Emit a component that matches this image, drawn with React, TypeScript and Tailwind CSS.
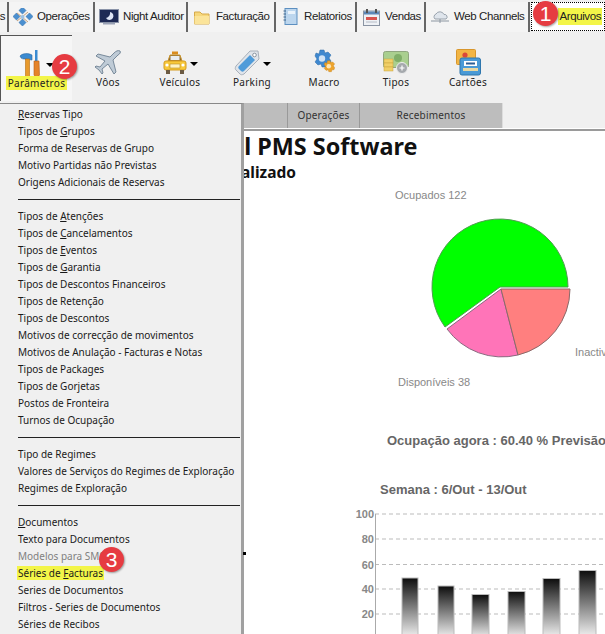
import React from "react";

const Dot = ({ x, y }: { x: number; y: number }) => <rect x={x} y={y} width="5" height="5" transform={`rotate(45 ${x + 2.5} ${y + 2.5})`} fill="#4a8fd0" stroke="#2c6aa8" strokeWidth="0.5" />;

const TabIcons: Record<string, React.ReactNode> = {
  ops: (
    <svg width="20" height="18" viewBox="0 0 20 18">
      <Dot x={7} y={0} /><Dot x={1} y={6} /><Dot x={14} y={6} /><Dot x={7} y={12} />
      <path d="M4 5 L9 9 L15 4 M4 13 L9 9 L15 14" stroke="#c9a27a" strokeWidth="1" fill="none" />
      <circle cx="9.5" cy="9" r="2" fill="#9cc3e6" />
    </svg>
  ),
  night: (
    <svg width="20" height="16" viewBox="0 0 20 16">
      <rect x="0.5" y="0.5" width="19" height="13" fill="#1e2a55" stroke="#8a93a8" />
      <path d="M11 3 A4 4 0 1 1 7 9 A5 5 0 0 0 11 3 Z" fill="#dfe5f5" />
      <rect x="4" y="14" width="12" height="1.5" fill="#9aa2b5" />
    </svg>
  ),
  folder: (
    <svg width="16" height="15" viewBox="0 0 16 15">
      <path d="M0.5 2 H6 L8 4 H15 V14 H0.5 Z" fill="#f6d77c" stroke="#d6aa4a" />
      <path d="M0.5 6 H15 V14 H0.5 Z" fill="#fbe49a" />
    </svg>
  ),
  book: (
    <svg width="15" height="18" viewBox="0 0 15 18">
      <rect x="2" y="0.5" width="12" height="16" fill="#bcd6ee" stroke="#5c8fc0" />
      <path d="M0.5 3 H3 M0.5 6 H3 M0.5 9 H3 M0.5 12 H3" stroke="#44688c" />
      <rect x="5" y="3" width="7" height="3" fill="#eaf3fb" />
    </svg>
  ),
  cal: (
    <svg width="17" height="17" viewBox="0 0 17 17">
      <rect x="0.5" y="2" width="16" height="14.5" fill="#eef1f5" stroke="#8a94a3" />
      <rect x="1" y="2.5" width="15" height="3" fill="#5d88b8" />
      <rect x="3" y="0" width="2" height="4" fill="#555" />
      <rect x="12" y="0" width="2" height="4" fill="#555" />
      <rect x="3" y="8" width="11" height="3" fill="#d9534f" />
      <path d="M3 13 H14" stroke="#b6bcc6" />
    </svg>
  ),
  cloud: (
    <svg width="18" height="13" viewBox="0 0 18 13">
      <path d="M4 8 A3 3 0 0 1 5 3 A4.5 4.5 0 0 1 13 3.5 A2.5 2.5 0 0 1 15 8 Z" fill="#dfe5ec" stroke="#9aa3ad" />
      <path d="M0 10 H18 M9 8 V12" stroke="#8c96a1" />
    </svg>
  ),
};

const tabs = [
  { label: "Operações", icon: "ops", w: "w-[86px]" },
  { label: "Night Auditor", icon: "night", w: "w-[93px]" },
  { label: "Facturação", icon: "folder", w: "w-[88px]" },
  { label: "Relatorios", icon: "book", w: "w-[81px]" },
  { label: "Vendas", icon: "cal", w: "w-[69px]" },
  { label: "Web Channels", icon: "cloud", w: "w-[104px]" },
];

const Plane = () => (
  <svg width="28" height="26" viewBox="0 0 28 26">
    <path d="M26 1 C24 0 22 1 20 3 L16 7 L4 4 L2 6 L11 11 L6 17 L2 16 L1 17 L5 20 L8 24 L9 23 L8 19 L14 14 L20 24 L22 22 L19 10 L24 5 C26 4 27 2 26 1 Z" fill="#bfcbd6" stroke="#6d8092" strokeWidth="0.9" />
  </svg>
);
const Taxi = () => (
  <svg width="24" height="24" viewBox="0 0 24 24">
    <rect x="9" y="0.5" width="6" height="3" fill="#d98c1f" />
    <path d="M5 10 L7 4 H17 L19 10 Z" fill="#8a6a3a" stroke="#c9952c" />
    <rect x="7.5" y="5" width="9" height="4" fill="#e8edf2" />
    <rect x="1" y="10" width="22" height="9" rx="2" fill="#f8c93a" stroke="#d59b20" />
    <rect x="7" y="13" width="10" height="4" fill="#fff3c2" stroke="#b58a25" strokeWidth="0.6" />
    <circle cx="4" cy="14" r="1.6" fill="#fff" /><circle cx="20" cy="14" r="1.6" fill="#fff" />
    <rect x="3" y="19" width="4" height="4" fill="#6b5a44" /><rect x="17" y="19" width="4" height="4" fill="#6b5a44" />
  </svg>
);
const Tag = () => (
  <svg width="26" height="26" viewBox="0 0 26 26">
    <path d="M16 1 L24 1 L25 9 L10 24 C8 25 7 25 6 24 L2 20 C1 19 1 18 2 16 Z" fill="#dfe4ea" stroke="#a8b0ba" />
    <path d="M16 5 L21 10 L10 21 C9 22 8 22 7 21 L5 19 C4 18 4 17 5 16 Z" fill="#4f9bd9" />
    <circle cx="20.5" cy="5" r="1.8" fill="#fff" stroke="#8a94a0" />
  </svg>
);
const gear = "M10 1 h4 l1 3 3 -1 3 3 -2 3 2 3 -1 3 -3 0 -1 3 h-4 l-1 -3 -3 1 -3 -3 2 -3 -2 -3 1 -3 3 1 z";
const Gears = () => (
  <svg width="26" height="27" viewBox="0 0 26 27">
    <path d={gear} fill="#3f88cf" stroke="#2d6aa6" strokeWidth="0.5" transform="translate(-1 0)" />
    <circle cx="11" cy="9.5" r="3.2" fill="#cfe2f5" />
    <g transform="translate(10 11) scale(0.65)"><path d={gear} fill="#eda32c" stroke="#c27f16" strokeWidth="0.6" /><circle cx="12" cy="9.5" r="3.5" fill="#fde6b5" /></g>
  </svg>
);
const Money = () => (
  <svg width="26" height="24" viewBox="0 0 26 24">
    <rect x="0.5" y="0.5" width="25" height="16" rx="2" fill="#a9cf8f" stroke="#8fa67f" />
    <circle cx="15" cy="7" r="4" fill="#7fae68" />
    <rect x="1" y="8" width="9" height="4" fill="#f0d068" stroke="#c9a33c" strokeWidth="0.5" />
    <rect x="1" y="12" width="9" height="4" fill="#f0d068" stroke="#c9a33c" strokeWidth="0.5" />
    <rect x="1" y="16" width="9" height="4" fill="#f0d068" stroke="#c9a33c" strokeWidth="0.5" />
    <circle cx="19" cy="17" r="5.5" fill="#a5a9ad" stroke="#eee" />
    <path d="M19 14.5 V19.5 M16.5 17 H21.5" stroke="#fff" strokeWidth="1.2" />
  </svg>
);
const Cards = () => (
  <svg width="25" height="27" viewBox="0 0 25 27">
    <rect x="0.5" y="0.5" width="19" height="15" rx="1" fill="#f2b544" stroke="#d8962c" />
    <circle cx="9" cy="6" r="2.6" fill="#d9483a" />
    <rect x="5" y="9" width="10" height="1.5" fill="#d9483a" />
    <rect x="4" y="9" width="20.5" height="17" rx="2" fill="#4a9ad6" stroke="#2e76ad" />
    <rect x="8" y="12" width="13" height="5" fill="#fff" />
    <rect x="10" y="13.5" width="9" height="2" fill="#2e5f95" />
    <rect x="7" y="19" width="15" height="3" fill="#e9d9a3" />
  </svg>
);
const Tools = () => (
  <svg width="24" height="28" viewBox="0 0 24 28">
    <path d="M1 6 C4 3 9 3 13 5 L13 10 L6 9 C4 9 2 9 1 6 Z" fill="#3b8bd1" stroke="#2a68a3" strokeWidth="0.6" />
    <rect x="6.5" y="9" width="4" height="18" fill="#e89a2c" stroke="#b86f12" strokeWidth="0.6" />
    <rect x="16" y="0" width="2.5" height="11" fill="#3b8bd1" />
    <path d="M15 11 H20 L20.5 25 C20 27 15.5 27 15 25 Z" fill="#e5842a" stroke="#b5601a" strokeWidth="0.6" />
  </svg>
);

const Arrow = () => <span className="ml-[3px] mt-[3px] w-0 h-0 border-x-[4px] border-x-transparent border-t-[4px] border-t-black" />;

const tools: { label: string; icon: React.ReactNode; arrow?: boolean; highlight?: boolean; active?: boolean }[] = [
  { label: "Parâmetros", icon: <Tools />, arrow: true, highlight: true, active: true },
  { label: "Vôos", icon: <Plane /> },
  { label: "Veículos", icon: <Taxi />, arrow: true },
  { label: "Parking", icon: <Tag />, arrow: true },
  { label: "Macro", icon: <Gears /> },
  { label: "Tipos", icon: <Money /> },
  { label: "Cartões", icon: <Cards /> },
];

type Item = { t?: React.ReactNode; sep?: boolean; dim?: boolean; hi?: boolean };
const menu: Item[] = [
  { t: <><u>R</u>eservas Tipo</> },
  { t: <>Tipos de <u>G</u>rupos</> },
  { t: "Forma de Reservas de Grupo" },
  { t: "Motivo Partidas não Previstas" },
  { t: "Origens Adicionais de Reservas" },
  { sep: true },
  { t: <>Tipos de <u>A</u>tenções</> },
  { t: <>Tipos de <u>C</u>ancelamentos</> },
  { t: <>Tipos de <u>E</u>ventos</> },
  { t: <>Tipos de <u>G</u>arantia</> },
  { t: "Tipos de Descontos Financeiros" },
  { t: "Tipos de Retenção" },
  { t: "Tipos de Descontos" },
  { t: "Motivos de correcção de movimentos" },
  { t: "Motivos de Anulação - Facturas e Notas" },
  { t: "Tipos de Packages" },
  { t: "Tipos de Gorjetas" },
  { t: "Postos de Fronteira" },
  { t: "Turnos de Ocupação" },
  { sep: true },
  { t: "Tipo de Regimes" },
  { t: "Valores de Serviços do Regimes de Exploração" },
  { t: "Regimes de Exploração" },
  { sep: true },
  { t: <><u>D</u>ocumentos</> },
  { t: "Texto para Documentos" },
  { t: "Modelos para SMS", dim: true },
  { t: <>Séries de <u>F</u>acturas</>, hi: true },
  { t: "Series de Documentos" },
  { t: "Filtros - Series de Documentos" },
  { t: "Séries de Recibos" },
];

const Badge = ({ n, cls }: { n: number; cls: string }) => (
  <div className={`absolute w-[25px] h-[25px] rounded-full bg-[#e63b41] text-white text-[21px] leading-[25px] text-center shadow-[1px_1px_2px_rgba(0,0,0,0.35)] font-['Liberation_Sans',sans-serif] ${cls}`}>{n}</div>
);

const bars = [
  { x: 402, w: 16, top: 577 },
  { x: 438, w: 16, top: 585 },
  { x: 472, w: 17, top: 593.5 },
  { x: 508, w: 17, top: 590.5 },
  { x: 543, w: 17, top: 577.5 },
  { x: 579, w: 17, top: 569.5 },
];

export default function App() {
  return (
    <div className="relative w-[605px] h-[634px] overflow-hidden bg-white flex flex-col font-['Noto_Sans',sans-serif]">
      <div className="h-[32px] flex items-stretch bg-[#f0f0f0] pt-[2px] font-['Liberation_Sans',sans-serif] text-[11.5px] tracking-[-0.4px] text-[#222]">
        <div className="w-[9px] flex items-center border-r-[2px] border-[#666] bg-[#f4f4f4] overflow-hidden justify-end pr-[2px]">s</div>
        {tabs.map((t) => (
          <div key={t.label} className={`${t.w} flex items-center gap-[3px] pl-[3px] border-r-[2px] border-[#666] bg-[#f4f4f4] whitespace-nowrap`}>
            <span className="flex w-[22px] justify-center shrink-0">{TabIcons[t.icon]}</span>
            <span>{t.label}</span>
          </div>
        ))}
        <div className="flex-1 mb-[1px] ml-[1px] border border-dotted border-black bg-white flex items-center justify-end pr-[2px]">
          <span className="bg-[#f3f548] px-[1px]">Arquivos</span>
        </div>
      </div>

      <div className="h-[71px] flex bg-[#f0f0f0] text-[10px] tracking-[0.3px] text-[#222] pt-[3px]">
        {tools.map((t) => (
          <div key={t.label} className={`w-[72px] h-[66px] flex flex-col items-center pt-[13px] ${t.active ? "border-t border-l border-[#555] bg-[#f6f6f6]" : ""}`}>
            <div className="h-[29px] flex items-center">
              {t.icon}
              {t.arrow && <Arrow />}
            </div>
            <span className={`-mt-[2px] leading-[14px] ${t.highlight ? "bg-[#f3f548] px-[2px]" : ""}`}>{t.label}</span>
          </div>
        ))}
      </div>

      <div className="h-[25px] flex bg-[#f0f0f0] text-[10px] tracking-[0.2px] text-[#333]">
        <div className="w-[288px] bg-[#bdbdbd] border-r border-[#999]" />
        <div className="w-[72px] bg-[#bdbdbd] border-r border-[#999] flex items-center justify-center">Operações</div>
        <div className="w-[143px] bg-[#bdbdbd] border-r border-[#ddd] flex items-center justify-center">Recebimentos</div>
      </div>
      <div className="h-[2px] mt-px bg-[#9a9a9a]" />

      <div className="flex-1 min-h-0 overflow-hidden">
        <div className="w-[417.5px] text-right text-[23.4px] leading-[30px] font-bold text-[#111] whitespace-nowrap">el PMS Software</div>
        <div className="w-[296px] text-right text-[15.5px] leading-[20px] font-bold text-[#111] whitespace-nowrap mt-[1px]">alizado</div>

        <svg className="block ml-[243px] mt-[-1px]" width="362" height="220" viewBox="243 180 362 220" fontFamily="Liberation Sans, sans-serif" fontSize="11" fill="#888">
          <text x="395" y="197.5">Ocupados 122</text>
          <path d="M500 286 H568 A68 68 0 1 0 445 326 Z" fill="#00ff00" stroke="#4f9d4f" />
          <path d="M501 288 L447 328 A68 68 0 0 0 518 354 Z" fill="#ff74b8" stroke="#8a6a80" />
          <path d="M501 288 L518 354 A68 68 0 0 0 570 288 Z" fill="#ff7f7f" stroke="#8a6a6a" />
          <text x="575" y="354.5">Inactivos</text>
          <text x="398" y="384.5">Disponíveis 38</text>
        </svg>

        <div className="ml-[387px] mt-[32px] w-[218px] overflow-hidden text-[13px] leading-[16px] font-bold text-[#666] whitespace-nowrap font-['Liberation_Sans',sans-serif]">Ocupação agora : 60.40 % Previsão</div>
        <div className="ml-[380px] mt-[33px] text-[13px] leading-[16px] font-bold text-[#666] whitespace-nowrap font-['Liberation_Sans',sans-serif]">Semana : 6/Out - 13/Out</div>

        <svg className="block ml-[343px] mt-[8px]" width="262" height="130" viewBox="343 505 262 130" fontFamily="Liberation Sans, sans-serif" fontSize="11" fontWeight="700" fill="#888">
          <defs>
            <linearGradient id="barFill" x1="0" y1="0" x2="0" y2="1">
              <stop offset="0" stopColor="#0d0d0d" />
              <stop offset="1" stopColor="#ffffff" />
            </linearGradient>
          </defs>
          {[513, 538, 563.5, 588, 613].map((y, i) => (
            <g key={y}>
              <line x1="375" x2="605" y1={y} y2={y} stroke="#bbb" strokeDasharray="4 3" />
              <text x="374" y={y + 4} textAnchor="end">{100 - i * 20}</text>
            </g>
          ))}
          <line x1="375.5" x2="375.5" y1="513" y2="634" stroke="#aaa" />
          {bars.map((b) => (
            <rect key={b.x} x={b.x} y={b.top} width={b.w} height={640 - b.top} fill="url(#barFill)" stroke="#bbb" />
          ))}
        </svg>
      </div>

      <div className="absolute left-0 top-[103px] w-[244px] h-[531px] bg-[#f0f0f0] border-t border-[#888] border-r-[3px] border-r-[#a0a0a0] pt-[2px] text-[10px] text-[#1a1a1a]">
        {menu.map((m, i) =>
          m.sep ? (
            <div key={i} className="h-[17px] flex items-center pl-[18px] pr-[1px]"><div className="w-full border-t border-[#222]" /></div>
          ) : (
            <div key={i} className={`h-[17px] leading-[17px] pl-[18px] whitespace-nowrap ${m.dim ? "text-[#808080]" : ""}`}>
              <span className={m.hi ? "bg-[#f3f548] ml-[-1px] px-[1px]" : ""}>{m.t}</span>
            </div>
          )
        )}
      </div>
      <span className="absolute left-[243px] top-[552px] w-[3px] h-[3px] bg-black" />

      <Badge n={1} cls="left-[533px] top-[1px]" />
      <Badge n={2} cls="left-[52px] top-[54px]" />
      <Badge n={3} cls="left-[99px] top-[547px]" />
    </div>
  );
}
